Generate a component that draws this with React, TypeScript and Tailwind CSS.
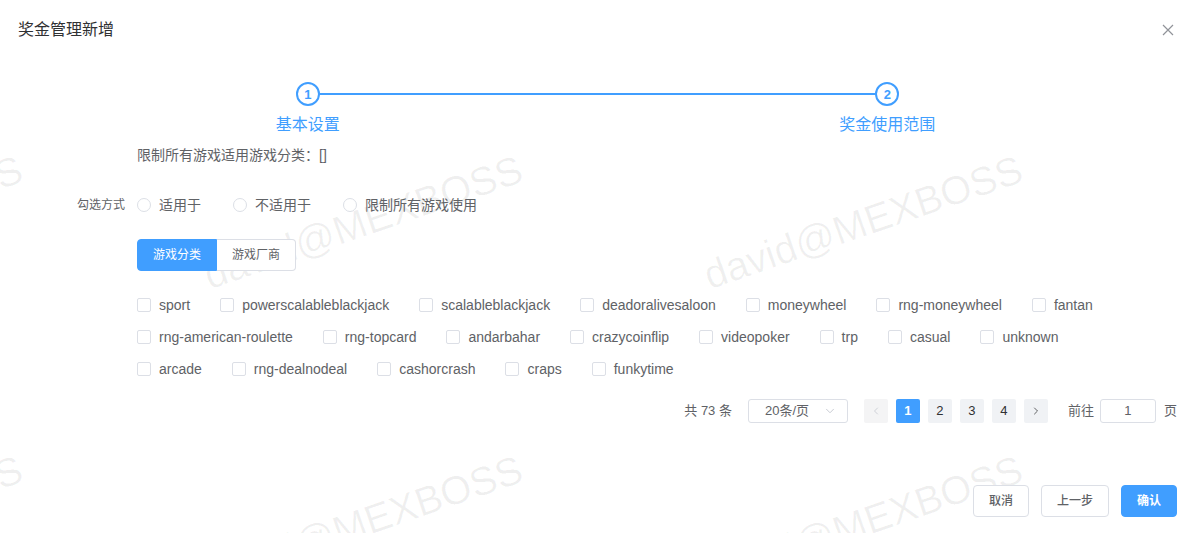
import { ChevronDown, ChevronLeft, ChevronRight } from "lucide-react";

const FONT = { fontFamily: '"Liberation Sans", "Noto Sans CJK SC", Arial, sans-serif' };

const categories = [
  "sport",
  "powerscalableblackjack",
  "scalableblackjack",
  "deadoralivesaloon",
  "moneywheel",
  "rng-moneywheel",
  "fantan",
  "rng-american-roulette",
  "rng-topcard",
  "andarbahar",
  "crazycoinflip",
  "videopoker",
  "trp",
  "casual",
  "unknown",
  "arcade",
  "rng-dealnodeal",
  "cashorcrash",
  "craps",
  "funkytime",
];

const watermarks = [
  [-137, 222],
  [363, 222],
  [863, 222],
  [1363, 222],
  [-137, 522],
  [363, 522],
  [863, 522],
  [1363, 522],
];

function Step({ n, label }: { n: number; label: string }) {
  return (
    <div className="flex flex-col items-center">
      <div className="w-6 h-6 rounded-full border-2 border-[#409eff] bg-white flex items-center justify-center text-[13px] font-bold text-[#409eff] leading-none relative z-10">
        {n}
      </div>
      <div className="mt-[7px] text-[16px] leading-6 text-[#409eff]">{label}</div>
    </div>
  );
}

function Radio({ label }: { label: string }) {
  return (
    <label className="flex items-center mr-8">
      <span className="w-[14px] h-[14px] rounded-full border border-[#dcdfe6] bg-white" />
      <span className="ml-2 text-[14px] text-[#606266]">{label}</span>
    </label>
  );
}

export default function App() {
  return (
    <div
      className="relative w-[1195px] h-[533px] overflow-hidden bg-white text-[#606266]"
      style={FONT}
    >
      {/* Watermark */}
      <div className="pointer-events-none absolute inset-0">
        {watermarks.map(([x, y], i) => (
          <span
            key={i}
            className="absolute whitespace-nowrap text-[40px] leading-none text-black/[0.06] -translate-x-1/2 -translate-y-1/2 -rotate-[19deg]"
            style={{ left: x, top: y, fontFamily: '"Liberation Sans", Arial, sans-serif' }}
          >
            david@MEXBOSS
          </span>
        ))}
      </div>

      <div className="relative">
        {/* Header */}
        <div className="h-[60px] flex items-center justify-between pl-[18px] pr-[21px]">
          <span className="text-[16px] leading-6 text-[#303133]">奖金管理新增</span>
          <svg width="12" height="12" viewBox="0 0 12 12" className="text-[#909399]">
            <path d="M1 1 L11 11 M11 1 L1 11" stroke="currentColor" strokeWidth="1.2" />
          </svg>
        </div>

        <div className="px-[18px]">
          {/* Steps */}
          <div className="relative mt-[22px] grid grid-cols-2">
            <div className="absolute top-[11px] left-[301px] right-[301px] h-[2px] bg-[#409eff]" />
            <Step n={1} label="基本设置" />
            <Step n={2} label="奖金使用范围" />
          </div>

          {/* Form */}
          <div className="mt-2 pl-[119px] text-[14px] leading-5 text-[#606266]">
            限制所有游戏适用游戏分类：[]
          </div>

          <div className="mt-[24px] flex items-center h-8">
            <div className="w-[119px] pr-3 text-right text-[12px] text-[#606266]">勾选方式</div>
            <Radio label="适用于" />
            <Radio label="不适用于" />
            <Radio label="限制所有游戏使用" />
          </div>

          <div className="mt-[18px] pl-[119px] flex">
            <button className="h-8 w-20 rounded-l-[4px] bg-[#409eff] border border-[#409eff] text-white text-[12px]">
              游戏分类
            </button>
            <button className="h-8 w-[79px] rounded-r-[4px] bg-white border border-l-0 border-[#dcdfe6] text-[#606266] text-[12px]">
              游戏厂商
            </button>
          </div>

          <div className="mt-[18px] ml-[119px] flex flex-wrap w-[1040px]">
            {categories.map((c) => (
              <label key={c} className="h-8 flex items-center mr-[30px]">
                <span className="w-[14px] h-[14px] rounded-[2px] border border-[#dcdfe6] bg-white" />
                <span className="ml-2 text-[14px] text-[#606266] whitespace-nowrap">{c}</span>
              </label>
            ))}
          </div>

          {/* Pagination */}
          <div className="mt-[14px] flex items-center justify-end h-6 text-[13px] text-[#606266]">
            <span>共 73 条</span>
            <div className="ml-4 w-[100px] h-6 border border-[#dcdfe6] rounded-[3px] bg-white flex items-center justify-between pl-[16px] pr-[10px]">
              <span className="text-[#606266]">20条/页</span>
              <ChevronDown className="w-[14px] h-[14px] text-[#c0c4cc]" strokeWidth={1.5} />
            </div>
            <div className="ml-4 flex gap-2">
              <div className="w-6 h-6 rounded-[2px] bg-[#f4f4f5] flex items-center justify-center text-[#c0c4cc]">
                <ChevronLeft className="w-3 h-3" strokeWidth={1.5} />
              </div>
              <div className="w-6 h-6 rounded-[2px] bg-[#409eff] flex items-center justify-center text-white font-bold">
                1
              </div>
              {[2, 3, 4].map((p) => (
                <div key={p} className="w-6 h-6 rounded-[2px] bg-[#f0f2f5] flex items-center justify-center text-[#303133]">
                  {p}
                </div>
              ))}
              <div className="w-6 h-6 rounded-[2px] bg-[#f0f2f5] flex items-center justify-center text-[#303133]">
                <ChevronRight className="w-3 h-3" strokeWidth={1.5} />
              </div>
            </div>
            <span className="ml-5">前往</span>
            <div className="ml-[6px] w-14 h-6 border border-[#dcdfe6] rounded-[3px] bg-white flex items-center justify-center text-[#606266]">
              1
            </div>
            <span className="ml-2">页</span>
          </div>

          {/* Footer */}
          <div className="mt-[62px] flex justify-end gap-3">
            <button className="h-8 w-14 rounded-[4px] border border-[#dcdfe6] bg-white text-[12px] font-medium text-[#606266]">
              取消
            </button>
            <button className="h-8 w-[68px] rounded-[4px] border border-[#dcdfe6] bg-white text-[12px] font-medium text-[#606266]">
              上一步
            </button>
            <button className="h-8 w-14 rounded-[4px] border border-[#409eff] bg-[#409eff] text-[12px] font-bold text-white">
              确认
            </button>
          </div>
        </div>
      </div>
    </div>
  );
}
